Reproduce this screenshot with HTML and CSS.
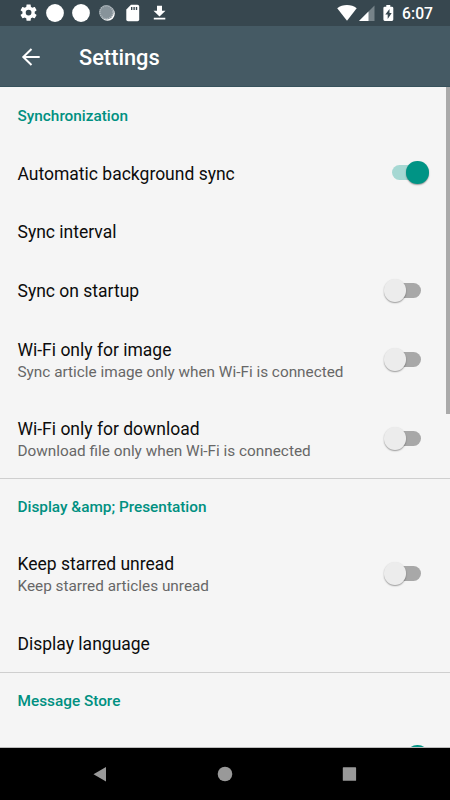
FILE: index.html
```
<!DOCTYPE html>
<html lang="en">
<head>
<meta charset="utf-8">
<title>Settings</title>
<link rel="stylesheet" href="styles.css">
</head>
<body>
<div class="screen">
  <div class="status">
    <div class="notifications">
      <svg width="18" height="18" viewBox="1.500 1.500 22 22"><path fill="#fff" fill-rule="evenodd" d="M19.43 12.98c.04-.32.07-.64.07-.98s-.03-.66-.07-.98l2.11-1.65c.19-.15.24-.42.12-.64l-2-3.46c-.12-.22-.39-.3-.61-.22l-2.49 1c-.52-.4-1.08-.73-1.69-.98l-.38-2.65C14.46 2.18 14.25 2 14 2h-4c-.25 0-.46.18-.49.42l-.38 2.65c-.61.25-1.17.59-1.69.98l-2.49-1c-.23-.09-.49 0-.61.22l-2 3.46c-.13.22-.07.49.12.64l2.11 1.65c-.04.32-.07.65-.07.98s.03.66.07.98l-2.11 1.65c-.19.15-.24.42-.12.64l2 3.46c.12.22.39.3.61.22l2.49-1c.52.4 1.08.73 1.69.98l.38 2.65c.03.24.24.42.49.42h4c.25 0 .46-.18.49-.42l.38-2.65c.61-.25 1.17-.59 1.69-.98l2.49 1c.23.09.49 0 .61-.22l2-3.46c.12-.22.07-.49-.12-.64zM12 15.5a3.5 3.5 0 1 1 0-7 3.5 3.5 0 0 1 0 7z"/></svg>
      <svg width="18" height="18"><circle cx="9" cy="9" r="8.900" fill="#fff"/></svg>
      <svg width="18" height="18"><circle cx="9" cy="9" r="8.900" fill="#fff"/></svg>
      <svg width="18" height="18"><circle cx="9.600" cy="9.600" r="7.200" fill="#fff"/><circle cx="8.400" cy="8.300" r="7.300" fill="#87939a"/><circle cx="8.400" cy="8.300" r="6.500" fill="none" stroke="#b5bdc2" stroke-width="1.400" stroke-dasharray="1 1"/></svg>
      <svg width="18" height="18"><path fill="#fff" d="M7 .8h6.500q1.700 0 1.700 1.700v13q0 1.700-1.700 1.700H4q-1.700 0-1.700-1.700V5.500z"/><path fill="#37474f" d="M7 3h1.400v3H7zM9.400 3h1.400v3H9.400zM11.800 3h1.400v3h-1.400z"/></svg>
      <svg width="18" height="18"><path fill="#fff" d="M7 1.800h5v5h3.500l-6 5.800-6-5.800H7zM3.800 13.800h11.500v1.800H3.800z"/></svg>
    </div>
    <div class="system">
      <svg width="20" height="18"><path fill="#fff" d="M.2 4.200C5.500 0 14.500 0 19.700 4.200L10 16.800z"/></svg>
      <svg class="signal" width="16" height="18"><path fill="#778389" d="M15.500 1.500V17H0z"/><path fill="#fff" d="M9.500 7.500V17H0z"/></svg>
      <svg class="battery" width="11" height="18"><path fill="#fff" d="M3.300 1h4v1.700h1.600q1.400 0 1.400 1.400v11.500q0 1.400-1.400 1.400H1.800Q.4 17 .4 15.600V4.100q0-1.400 1.400-1.400h1.500z"/><path fill="#37474f" d="M6.500 5L2.300 10.500h2.400V15l4-6H6.500z"/></svg>
      <span class="time">6:07</span>
    </div>
  </div>
  <div class="appbar">
    <svg class="back" width="20" height="18" viewBox="0 0 20 18"><path fill="none" stroke="#fff" stroke-width="2" d="M18.700 9H2.200M10.500 1L2.300 9l8.200 8"/></svg>
    <h1>Settings</h1>
  </div>
  <main class="content">
    <section class="sync">
      <h2>Synchronization</h2>
      <div class="row"><div class="title">Automatic background sync</div><span class="switch on"></span></div>
      <div class="row"><div class="title">Sync interval</div></div>
      <div class="row"><div class="title">Sync on startup</div><span class="switch"></span></div>
      <div class="row tall"><div class="text"><div class="title">Wi-Fi only for image</div><div class="summary">Sync article image only when Wi-Fi is connected</div></div><span class="switch"></span></div>
      <div class="row tall"><div class="text"><div class="title">Wi-Fi only for download</div><div class="summary">Download file only when Wi-Fi is connected</div></div><span class="switch"></span></div>
    </section>
    <section class="display">
      <h2>Display &amp;amp; Presentation</h2>
      <div class="row tall"><div class="text"><div class="title">Keep starred unread</div><div class="summary">Keep starred articles unread</div></div><span class="switch"></span></div>
      <div class="row"><div class="title">Display language</div></div>
    </section>
    <section class="store">
      <h2>Message Store</h2>
      <div class="row"><span class="switch on"></span></div>
    </section>
    <div class="scrollbar"></div>
  </main>
  <nav class="navbar">
    <svg width="16" height="16"><path fill="#999" d="M14 1v14.500L1.500 8.200z"/></svg>
    <svg width="16" height="16"><circle cx="8" cy="8" r="7.300" fill="#999"/></svg>
    <svg width="16" height="16"><rect x="1.800" y="1.300" width="13.300" height="13.500" rx=".6" fill="#999"/></svg>
  </nav>
</div>
</body>
</html>
```
FILE: styles.css
```
* { box-sizing: border-box; }
body { margin: 0; font-family: Roboto, sans-serif; }
svg { display: block; flex: none; }
.screen { width: 450px; height: 800px; display: flex; flex-direction: column; overflow: hidden; }
.status { height: 26px; flex: none; background: #37474f; display: flex; justify-content: space-between; padding: 4px 17px 0 19.500px; }
.notifications { display: flex; gap: 8.100px; }
.system { display: flex; }
.signal { margin-left: 2px; }
.battery { margin-left: 8px; }
.time { margin-left: 8px; font-size: 15.700px; font-weight: 500; line-height: 19px; color: #fff; }
.appbar { height: 61px; flex: none; background: #455a64; border-bottom: 1px solid #37525c; display: flex; align-items: center; padding: 1px 0 0 21px; }
h1 { margin: 2px 0 0 38px; font-size: 21.800px; font-weight: 500; line-height: 26px; color: #fff; }
.content { height: 661px; flex: none; position: relative; background: #f5f5f5; overflow: hidden; border-bottom: 1px solid #bcbcbc; }
section + section { border-top: 1px solid #cfcfcf; }
h2 { margin: 0; height: 57px; padding-left: 17.500px; font-size: 15.350px; font-weight: 500; line-height: 58px; color: #009081; }
section + section h2 { height: 56px; line-height: 56px; }
.row { height: 58.600px; padding: 0 21.500px 0 17.500px; display: flex; align-items: center; justify-content: space-between; }
.row.tall { height: 79px; }
.title { font-size: 17.500px; line-height: 23px; color: #0c0c0c; }
.row > .title, .text { padding-top: 2px; }
.display .row { height: 58.700px; }
.display .row > .title { padding-top: 3px; }
.display .row.tall { height: 78.500px; }
.display .text { padding-top: 1px; }
.summary { font-size: 15.330px; line-height: 20px; color: #676767; margin-top: -.5px; }
.switch { position: relative; width: 45px; height: 23px; margin-left: auto; flex: none; }
.sync .switch { top: .5px; }
.display .switch, .sync .switch.on { top: -.5px; }
.store .switch { top: -1.500px; }
.switch::before { content: ""; position: absolute; left: 8px; top: 4px; width: 29px; height: 15px; border-radius: 8px; background: #a8a8a8; }
.switch::after { content: ""; position: absolute; left: 0; top: 0; width: 22.500px; height: 22.500px; border-radius: 50%; background: #ececec; box-shadow: 0 1px 1.500px rgba(0, 0, 0, .38); }
.switch.on::before { background: #a6d8d3; }
.switch.on::after { left: 22.500px; background: #009485; }
.scrollbar { position: absolute; right: 0; top: 0; width: 4px; height: 327px; background: #aaa; }
.navbar { flex: 1; background: #000; display: flex; justify-content: space-between; padding: 18px 93px 0 92px; }
```
